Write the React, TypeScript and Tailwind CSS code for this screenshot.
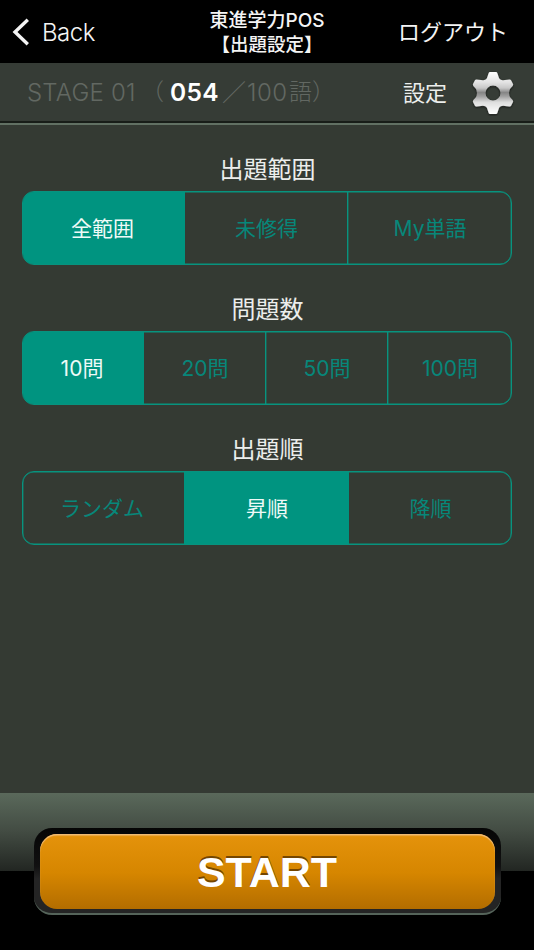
type Group = { title: string; options: string[]; selected: number; columns: string };

const groups: Group[] = [
  { title: '出題範囲', options: ['全範囲', '未修得', 'My単語'], selected: 0, columns: 'grid-cols-[162px_162px_164px]' },
  { title: '問題数', options: ['10問', '20問', '50問', '100問'], selected: 0, columns: 'grid-cols-[121px_121px_122px_124px]' },
  { title: '出題順', options: ['ランダム', '昇順', '降順'], selected: 1, columns: 'grid-cols-[161px_165px_162px]' },
];

function Segments({ title, options, selected, columns }: Group) {
  return (
    <section className="h-[140px] px-[22px]">
      <h2 className="flex h-[48px] items-center justify-center pt-[5px] pl-px text-2xl text-[#eceeec]">{title}</h2>
      <div
        className={`grid h-[74px] overflow-hidden rounded-[12px] border border-[#07937f] shadow-[inset_0_0_0_0.4px_#07937f] ${columns}`}
      >
        {options.map((option, i) => (
          <button
            key={option}
            className={`flex items-center justify-center text-[21px] ${
              i === selected ? 'bg-[#009480] text-[#eefaf7]' : 'text-[#07877a]'
            } ${i === 0 ? 'pr-[3px]' : 'pl-px'} ${
              i > 0 && i !== selected && i - 1 !== selected ? 'border-l border-[#07937f] shadow-[inset_0.4px_0_0_#07937f]' : ''
            }`}
          >
            {option}
          </button>
        ))}
      </div>
    </section>
  );
}

function Gear() {
  return (
    <svg className="h-[46px] w-[44px]" viewBox="0 0 44 46">
      <defs>
        <linearGradient id="metal" x1="0" y1="0" x2="0" y2="1">
          <stop offset="0" stopColor="#ffffff" />
          <stop offset=".25" stopColor="#e2e2e2" />
          <stop offset=".38" stopColor="#c8c8c8" />
          <stop offset=".49" stopColor="#858585" />
          <stop offset=".58" stopColor="#a0a0a0" />
          <stop offset=".72" stopColor="#dedede" />
          <stop offset="1" stopColor="#ffffff" />
        </linearGradient>
        <filter id="shade" x="-20%" y="-20%" width="140%" height="140%">
          <feDropShadow dx="0" dy="1" stdDeviation="1.2" floodColor="#111" floodOpacity=".7" />
        </filter>
      </defs>
      <path
        filter="url(#shade)"
        fill="url(#metal)"
        fillRule="evenodd"
        d="M19 2H25Q26 2 26.3 3L28 8Q28.6 9.6 30.5 10Q32.2 10.4 34 10.1L38.5 9.4Q39.6 9.3 40.2 10.4L42 13.9Q42.4 15 41.6 16L39.5 18.3Q38 20 38 23Q38 26 39.5 27.7L41.6 30Q42.4 31 42 32.1L40.2 35.6Q39.6 36.7 38.5 36.6L34 35.9Q32.2 35.6 30.5 36Q28.6 36.4 28 38L26.3 43Q26 44 25 44H19Q18 44 17.7 43L16 38Q15.4 36.4 13.5 36Q11.8 35.6 10 35.9L5.5 36.6Q4.4 36.7 3.8 35.6L2 32.1Q1.6 31 2.4 30L4.5 27.7Q6 26 6 23Q6 20 4.5 18.3L2.4 16Q1.6 15 2 13.9L3.8 10.4Q4.4 9.3 5.5 9.4L10 10.1Q11.8 10.4 13.5 10Q15.4 9.6 16 8L17.7 3Q18 2 19 2ZM22 15.5A7.5 7.5 0 1 0 22 30.5A7.5 7.5 0 1 0 22 15.5Z"
      />
    </svg>
  );
}

export default function App() {
  return (
    <div className="flex h-[950px] w-[534px] flex-col overflow-hidden bg-[#343a33] font-['Inter','Noto_Sans_CJK_JP',sans-serif] leading-none font-normal whitespace-nowrap">
      <header className="grid h-[63px] shrink-0 grid-cols-[177px_180px_177px] bg-black text-[#f4f4f4]">
        <button className="flex items-center pl-[12px]">
          <svg className="h-[28px] w-[18px]" viewBox="0 0 18 28" fill="none" stroke="currentColor" strokeWidth="3.4">
            <path d="M15.8 1.8L3 14L15.8 26.2" />
          </svg>
          <span className="ml-[12px] pt-[2px] text-[24px] font-light tracking-[-0.5px]">Back</span>
        </button>
        <h1 className="pt-[9px] text-center text-[19px] leading-[23.5px] font-medium">
          東進学力POS
          <br />
          <span className="text-[18.5px]">【出題設定】</span>
        </h1>
        <button className="flex items-center justify-end pr-[26px] text-[22px]">ログアウト</button>
      </header>

      <div className="flex h-[62px] shrink-0 flex-col bg-[#363c36]">
        <div className="flex h-[58px] items-center pt-px pl-[27px] text-[24px] font-light text-[#626862]">
          <span className="w-[114px] tracking-[0.2px]">STAGE 01</span>
          <span className="w-[29px] text-[23px]">（</span>
          <span className="w-[52px] text-[24.5px] font-semibold tracking-[0.3px] text-white">054</span>
          <span className="w-[25px]">／</span>
          <span className="w-[42px] tracking-[0.5px]">100</span>
          <span className="w-[114px] text-[23px]">語）</span>
          <span className="w-[68px] text-[22px] font-normal text-[#eceeec]">設定</span>
          <Gear />
        </div>
        <div className="h-[2px] bg-[#181d18]" />
        <div className="h-[2px] bg-[#617063]" />
      </div>

      <main className="h-[668px] shrink-0 pt-[18px]">
        {groups.map((group) => (
          <Segments key={group.title} {...group} />
        ))}
      </main>

      <footer className="flex h-[157px] shrink-0 items-start justify-center bg-[linear-gradient(to_bottom,#5a695b_0px,#434c43_38px,#222622_78px,#000_78px)] pt-[35px]">
        <div className="h-[87px] w-[467px] rounded-[18px] border-b-2 border-[#55645a] bg-[linear-gradient(to_bottom,#050505,#111_45%,#242424_60%,#242424)] px-[6px] pt-[6px]">
          <button className="flex h-[75px] w-full items-center justify-center rounded-[17px] bg-[linear-gradient(to_bottom,#e5930b,#d68600_52%,#b36d00)] pt-[2px] font-['Liberation_Sans',sans-serif] text-[43px] font-bold text-white shadow-[inset_0_1.5px_1px_#f1bd79] [text-shadow:0_-2px_0_#754600]">
            START
          </button>
        </div>
      </footer>
    </div>
  );
}
